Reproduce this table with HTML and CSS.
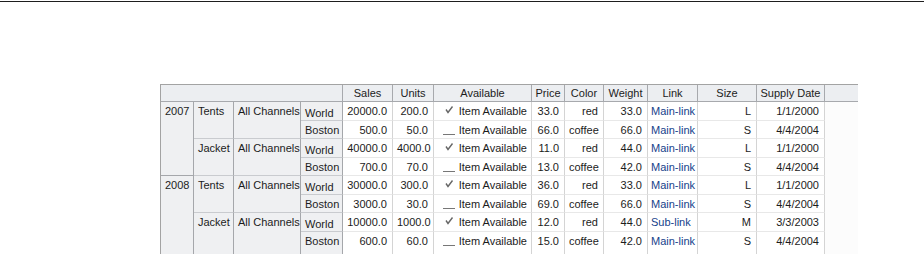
FILE: index.html
```html
<!DOCTYPE html>
<html>
<head>
<meta charset="utf-8">
<link rel="stylesheet" href="styles.css">
</head>
<body>
<div class="rule"></div>
<div class="pivot">
  <div class="hd corner c4"></div>
  <div class="hd">Sales</div>
  <div class="hd">Units</div>
  <div class="hd">Available</div>
  <div class="hd">Price</div>
  <div class="hd">Color</div>
  <div class="hd">Weight</div>
  <div class="hd">Link</div>
  <div class="hd">Size</div>
  <div class="hd">Supply Date</div>
  <div class="hd fill"></div>

  <div class="rh r4">2007</div>
  <div class="rh r2">Tents</div>
  <div class="rh r2">All Channels</div>
  <div class="rh world">World</div>
  <div class="d num">20000.0</div><div class="d num">200.0</div>
  <div class="d avail"><svg class="ic" width="12" height="11" viewBox="0 0 12 11"><path d="M3 4.5 L5 7.5 L9.5 1.5" fill="none" stroke="#666" stroke-width="1.4"/></svg>Item Available</div>
  <div class="d num">33.0</div><div class="d num">red</div><div class="d num">33.0</div>
  <div class="d link">Main-link</div><div class="d num">L</div><div class="d num">1/1/2000</div>
  <div class="dfill"></div>

  <div class="rh">Boston</div>
  <div class="d num">500.0</div><div class="d num">50.0</div>
  <div class="d avail"><svg class="ic" width="12" height="11" viewBox="0 0 12 11"><path d="M0 10.5 H12" fill="none" stroke="#777" stroke-width="1"/></svg>Item Available</div>
  <div class="d num">66.0</div><div class="d num">coffee</div><div class="d num">66.0</div>
  <div class="d link">Main-link</div><div class="d num">S</div><div class="d num">4/4/2004</div>
  <div class="dfill"></div>

  <div class="rh r2">Jacket</div>
  <div class="rh r2">All Channels</div>
  <div class="rh world">World</div>
  <div class="d num">40000.0</div><div class="d num">4000.0</div>
  <div class="d avail"><svg class="ic" width="12" height="11" viewBox="0 0 12 11"><path d="M3 4.5 L5 7.5 L9.5 1.5" fill="none" stroke="#666" stroke-width="1.4"/></svg>Item Available</div>
  <div class="d num">11.0</div><div class="d num">red</div><div class="d num">44.0</div>
  <div class="d link">Main-link</div><div class="d num">L</div><div class="d num">1/1/2000</div>
  <div class="dfill"></div>

  <div class="rh">Boston</div>
  <div class="d num">700.0</div><div class="d num">70.0</div>
  <div class="d avail"><svg class="ic" width="12" height="11" viewBox="0 0 12 11"><path d="M0 10.5 H12" fill="none" stroke="#777" stroke-width="1"/></svg>Item Available</div>
  <div class="d num">13.0</div><div class="d num">coffee</div><div class="d num">42.0</div>
  <div class="d link">Main-link</div><div class="d num">S</div><div class="d num">4/4/2004</div>
  <div class="dfill"></div>

  <div class="rh r4">2008</div>
  <div class="rh r2">Tents</div>
  <div class="rh r2">All Channels</div>
  <div class="rh world">World</div>
  <div class="d num">30000.0</div><div class="d num">300.0</div>
  <div class="d avail"><svg class="ic" width="12" height="11" viewBox="0 0 12 11"><path d="M3 4.5 L5 7.5 L9.5 1.5" fill="none" stroke="#666" stroke-width="1.4"/></svg>Item Available</div>
  <div class="d num">36.0</div><div class="d num">red</div><div class="d num">33.0</div>
  <div class="d link">Main-link</div><div class="d num">L</div><div class="d num">1/1/2000</div>
  <div class="dfill"></div>

  <div class="rh">Boston</div>
  <div class="d num">3000.0</div><div class="d num">30.0</div>
  <div class="d avail"><svg class="ic" width="12" height="11" viewBox="0 0 12 11"><path d="M0 10.5 H12" fill="none" stroke="#777" stroke-width="1"/></svg>Item Available</div>
  <div class="d num">69.0</div><div class="d num">coffee</div><div class="d num">66.0</div>
  <div class="d link">Main-link</div><div class="d num">S</div><div class="d num">4/4/2004</div>
  <div class="dfill"></div>

  <div class="rh r2">Jacket</div>
  <div class="rh r2">All Channels</div>
  <div class="rh world">World</div>
  <div class="d num">10000.0</div><div class="d num">1000.0</div>
  <div class="d avail"><svg class="ic" width="12" height="11" viewBox="0 0 12 11"><path d="M3 4.5 L5 7.5 L9.5 1.5" fill="none" stroke="#666" stroke-width="1.4"/></svg>Item Available</div>
  <div class="d num">12.0</div><div class="d num">red</div><div class="d num">44.0</div>
  <div class="d link">Sub-link</div><div class="d num">M</div><div class="d num">3/3/2003</div>
  <div class="dfill"></div>

  <div class="rh">Boston</div>
  <div class="d num">600.0</div><div class="d num">60.0</div>
  <div class="d avail"><svg class="ic" width="12" height="11" viewBox="0 0 12 11"><path d="M0 10.5 H12" fill="none" stroke="#777" stroke-width="1"/></svg>Item Available</div>
  <div class="d num">15.0</div><div class="d num">coffee</div><div class="d num">42.0</div>
  <div class="d link">Main-link</div><div class="d num">S</div><div class="d num">4/4/2004</div>
  <div class="dfill"></div>
</div>
</body>
</html>
```

FILE: styles.css
```css
html, body {
  margin: 0;
  padding: 0;
  background: #fff;
  overflow: hidden;
}
body {
  font-family: "Liberation Sans", Arial, sans-serif;
  font-size: 11px;
  color: #1c1c1c;
}
.rule {
  margin-top: 1px;
  height: 0;
  border-top: 1px solid #1e1e1e;
}
.pivot {
  margin: 82px 0 0 160px;
  width: 697px;
  display: grid;
  grid-template-columns: 33px 40px 67px 42px 50px 41px 98px 33px 39px 44px 50px 59px 68px 33px;
  grid-template-rows: 17px 19px 18px 19px 18px 19px 18px 19px 26px;
  border-top: 1px solid #a3a3a3;
  border-left: 1px solid #a3a3a3;
  line-height: 13px;
  white-space: nowrap;
}
.pivot > div {
  box-sizing: border-box;
  overflow: hidden;
}
.c4 { grid-column: span 4; }
.r2 { grid-row: span 2; }
.r4 { grid-row: span 4; }

.hd {
  background: #eceef1;
  border-right: 1px solid #a7a9ad;
  border-bottom: 1px solid #a7a9ad;
  text-align: center;
  padding-top: 2px;
}
.hd.fill {
  border-right: none;
}
.rh {
  background: #eff0f2;
  border-right: 1px solid #a5a7ab;
  border-bottom: 1px solid #c9cbcf;
  padding: 3px 4px 0 4px;
}
.rh.world {
  padding-top: 5px;
}
.r4 {
  border-bottom-color: #a5a7ab;
}
.d {
  background: #fff;
  border-right: 1px solid #d4d4d4;
  border-bottom: 1px solid #e8e8e8;
  padding: 3px 5px 0 4px;
}
.num {
  text-align: right;
}
.link {
  color: #15428b;
  padding-left: 3px;
}
.avail {
  display: flex;
  justify-content: flex-end;
  align-items: flex-start;
  gap: 4px;
  padding-right: 4px;
}
.ic {
  flex: none;
}
.dfill {
  background: #fcfcfc;
}
```
